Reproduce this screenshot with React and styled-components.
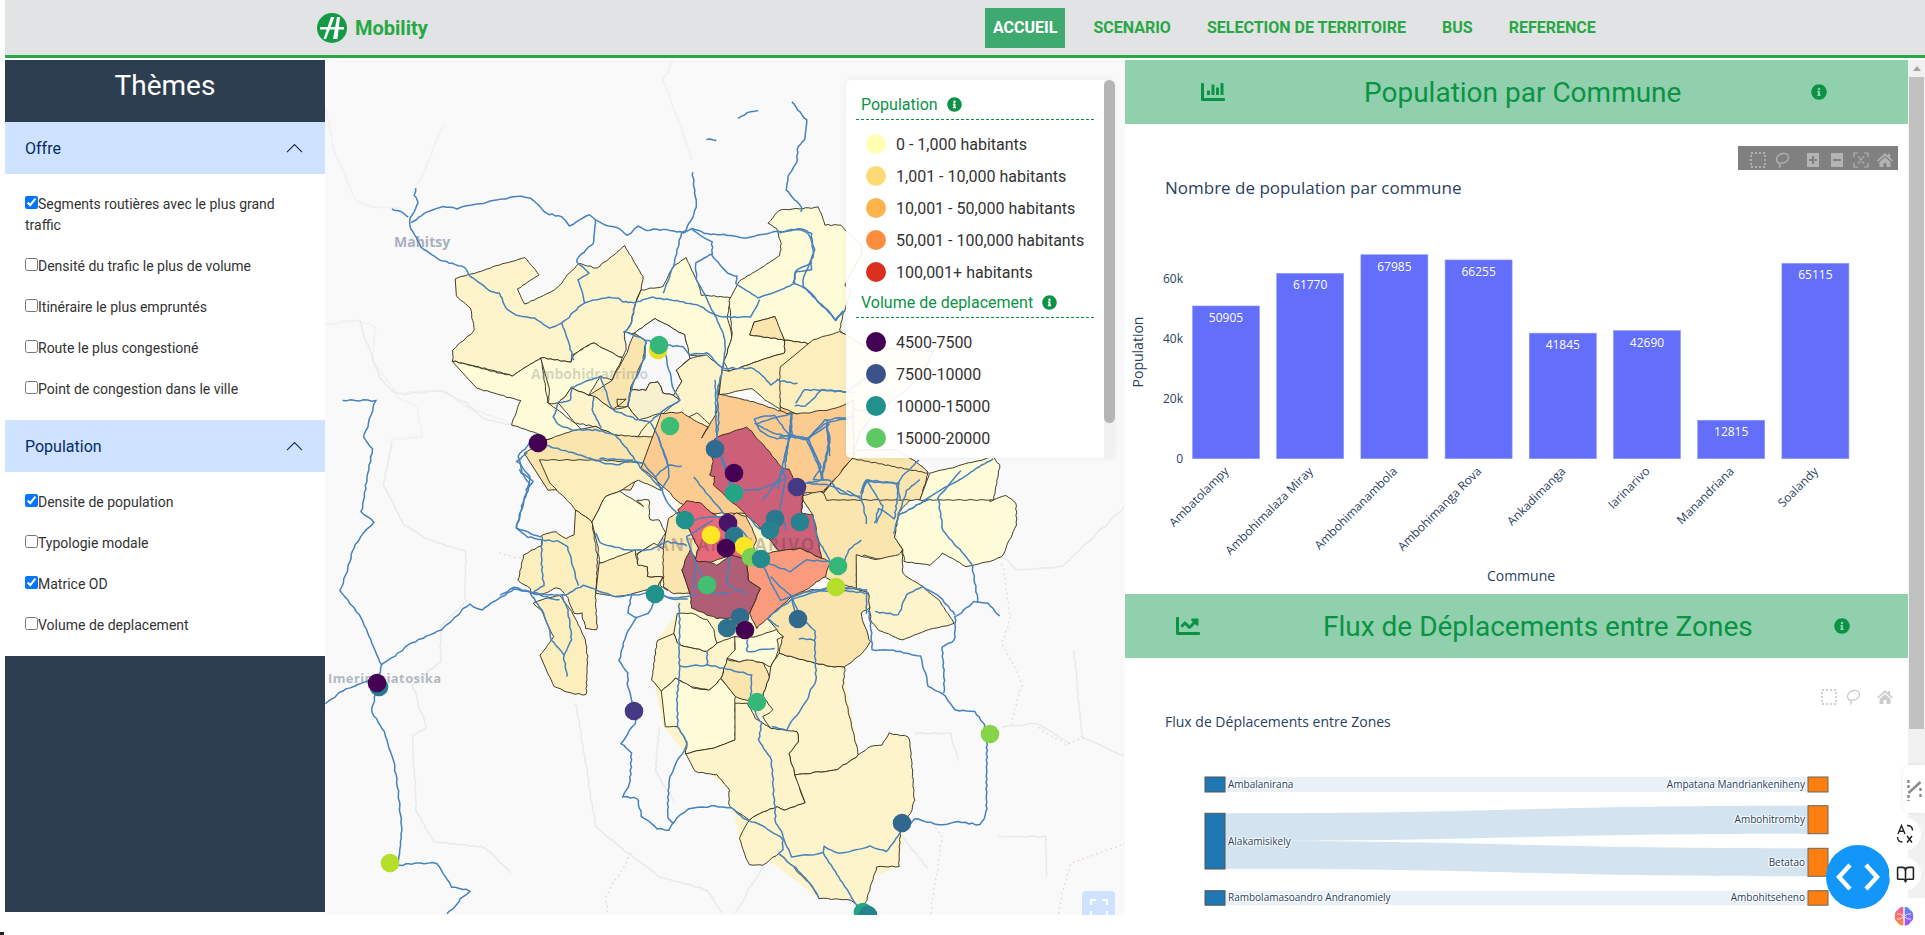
import React from 'react'
import styled, { createGlobalStyle } from 'styled-components'
import { FaChartBar, FaChartLine, FaInfoCircle } from 'react-icons/fa'
import { BookOpen } from 'lucide-react'

const GlobalStyle = createGlobalStyle`
  html, body {
    margin: 0;
    height: 100%;
    overflow: hidden;
    background: #fff;
    font-family: Roboto, "Liberation Sans", sans-serif;
  }
`

const green = '#0a9345'

/* ---------- navbar ---------- */
const Page = styled.div`
  width: 1925px;
  height: 935px;
  padding-left: 5px;
  box-sizing: border-box;
`
const Navbar = styled.nav`
  height: 55px;
  background: #e1e3e5;
  border-bottom: 3px solid #28a745;
  display: flex;
  align-items: center;
  padding-left: 312px;
`
const Brand = styled.div`
  display: flex;
  align-items: center;
  gap: 8px;
  width: 668px;
  font-size: 20px;
  font-weight: 700;
  color: #28a745;
`
const NavLink = styled.a`
  height: 40px;
  display: flex;
  align-items: center;
  padding: 0 8px;
  margin-right: 20px;
  font-size: 16px;
  font-weight: 700;
  color: ${props => props.active ? '#fff' : '#28a745'};
  background: ${props => props.active ? '#3faa70' : 'transparent'};
`

/* ---------- columns ---------- */
const Content = styled.div`
  display: flex;
  align-items: flex-start;
  margin-top: 2px;
`
const Sidebar = styled.aside`
  width: 320px;
  height: 852px;
  display: flex;
  flex-direction: column;
  background: #2c3e50;
`
const SideTitle = styled.h2`
  margin: 0;
  height: 62px;
  line-height: 52px;
  text-align: center;
  color: #fff;
  font-size: 28px;
  font-weight: 400;
`
const AccordionHead = styled.div`
  height: 52px;
  background: #cfe2ff;
  color: #052c65;
  font-size: 16px;
  display: flex;
  align-items: center;
  justify-content: space-between;
  padding: 0 22px 0 20px;
`
const AccordionBody = styled.div`
  background: #fff;
  padding: 20px 20px 0;
`
const Check = styled.label`
  display: block;
  margin-bottom: 20px;
  font-size: 14px;
  line-height: 21px;
  color: #333;
  input { margin: 0; width: 13px; height: 13px; }
`
const MapPane = styled.section`
  position: relative;
  width: 800px;
  height: 855px;
  overflow: hidden;
  background: #f9f9f9;
`
const MapCanvas = styled.svg`
  display: block;
  width: 800px;
  height: 855px;
  polygon, polyline, path { vector-effect: non-scaling-stroke; stroke-linejoin: round; }
`
const Right = styled.div`
  width: 783px;
`
const PanelHead = styled.header`
  height: 64px;
  background: #90d0ac;
  color: ${green};
  display: flex;
  align-items: center;
  padding-left: ${props => props.left}px;
  h3 {
    margin: 0 0 0 ${props => props.gapA}px;
    width: ${props => props.titleWidth}px;
    white-space: nowrap;
    font-size: 28px;
    font-weight: 400;
  }
  svg { flex: none; }
  svg:last-child { margin-left: ${props => props.gapB}px; }
`
const PanelBody = styled.div`
  position: relative;
  height: ${props => props.h}px;
  background: #fff;
`
const Chart = styled.svg`
  display: block;
  font-family: "Open Sans", sans-serif;
`
const Modebar = styled.div`
  position: absolute;
  top: ${props => props.top}px;
  right: 10px;
  display: flex;
  align-items: center;
  padding: 3px 5px 0 ${props => props.pad}px;
  box-sizing: border-box;
  height: 24px;
  gap: 8px;
  color: ${props => props.dark ? '#b3b3b3' : '#cdcdcd'};
  background: ${props => props.dark ? '#808080' : 'transparent'};
  svg:nth-child(3) { margin-left: ${props => props.groupGap}px; }
`
const Track = styled.div`
  width: 17px;
  height: 855px;
  background: #f1f1f1;
  display: flex;
  flex-direction: column;
  align-items: center;
`
const TrackArrow = styled.div`
  margin-top: 6px;
  width: 0;
  height: 0;
  border-left: 4px solid transparent;
  border-right: 4px solid transparent;
  border-bottom: 5px solid #a3a3a3;
`
const TrackThumb = styled.div`
  margin-top: 6px;
  width: 15px;
  height: 652px;
  background: #c1c1c1;
`

/* ---------- map legend ---------- */
const Legend = styled.div`
  position: absolute;
  top: 20px;
  left: 521px;
  width: 269px;
  height: 378px;
  display: flex;
  border-radius: 5px;
  overflow: hidden;
  box-shadow: 0 0 6px rgba(0,0,0,.06);
`
const LegendBody = styled.div`
  width: 238px;
  padding: 10px 10px 0;
  background: rgba(255,255,255,.91);
`
const LegendTitle = styled.div`
  height: 29px;
  line-height: 28px;
  padding-left: 5px;
  border-bottom: 1px dashed ${green};
  margin-bottom: 8px;
  color: ${green};
  font-size: 16px;
  display: flex;
  align-items: center;
  gap: 9px;
`
const LegendRow = styled.div`
  height: 32px;
  display: flex;
  align-items: center;
  gap: 10px;
  padding-left: 10px;
  font-size: 16px;
  color: #333;
  white-space: nowrap;
`
const Swatch = styled.span`
  width: 20px;
  height: 20px;
  border-radius: 50%;
  background: ${props => props.color};
`
const LegendTrack = styled.div`
  width: 11px;
  background: rgba(240,240,240,.9);
`
const LegendThumb = styled.div`
  height: 343px;
  border-radius: 6px;
  background: #b5b5b5;
`
const FullScreen = styled.button`
  position: absolute;
  left: 757px;
  top: 831px;
  width: 33px;
  height: 33px;
  padding: 0;
  border: 0;
  border-radius: 4px;
  background: #cfe2ff;
  display: flex;
  align-items: center;
  justify-content: center;
`

/* ---------- floating widgets ---------- */
const Fab = styled.div`
  position: fixed;
  left: 1826px;
  top: 845px;
  width: 64px;
  height: 64px;
  border-radius: 50%;
  background: #1296fa;
  display: flex;
  align-items: center;
  justify-content: center;
  z-index: 3;
`
const SideTab = styled.div`
  position: fixed;
  left: 1903px;
  top: 765px;
  width: 22px;
  height: 48px;
  background: #fff;
  border-radius: 8px 0 0 8px;
  box-shadow: 0 0 4px rgba(0,0,0,.08);
  display: flex;
  align-items: center;
  padding-left: 4px;
  box-sizing: border-box;
`
const RoundTool = styled.div`
  position: fixed;
  left: 1889px;
  top: ${props => props.top}px;
  width: 32px;
  height: 32px;
  border-radius: 50%;
  background: #fff;
  color: #222;
  display: flex;
  align-items: center;
  justify-content: center;
  z-index: 4;
`
const BrainPill = styled.div`
  position: fixed;
  left: 1885px;
  top: 898px;
  width: 40px;
  height: 37px;
  background: #fff;
  border-radius: 20px 0 0 20px;
  display: flex;
  align-items: center;
  padding-left: 9px;
  box-sizing: border-box;
  z-index: 4;
`
const CornerMark = styled.div`
  position: fixed;
  left: 0;
  bottom: 0;
  width: 4px;
  height: 3px;
  background: #222;
`

/* ---------- map data, traced per crop ---------- */
const light = '#fefbd8'
const pale = '#fdf4cc'
const soft = '#fdefbd'
const wheat = '#fbe5ae'
const orange = '#fbcb90'
const coral = '#fb9b7e'
const rose = '#cc6078'
const pink = '#e66a78'
const plum = '#b05e76'

// the hand traced lines are too clean, this roughens them the same way on shared borders
const wiggle = (points, amp = 1.5, step = 10) => {
  const pts = points.trim().split(' ').map(p => p.split(',').map(Number))
  const out = []
  const push = (x, y) => out.push(
    `${(x + Math.sin(x * .61 + y * .37) * amp + Math.sin(y * 1.3) * amp * .5).toFixed(1)},${(y + Math.cos(x * .43 - y * .59) * amp + Math.sin(x * 1.1) * amp * .5).toFixed(1)}`
  )
  pts.forEach(([x, y], i) => {
    const next = pts[i + 1]
    if (!next) return push(x, y)
    const n = Math.max(1, Math.round(Math.hypot(next[0] - x, next[1] - y) / step))
    for (let k = 0; k < n; k++) push(x + (next[0] - x) * k / n, y + (next[1] - y) * k / n)
  })
  return out.join(' ')
}

const northUnder = ['640,893 1175,925 1165,1090 985,1130 860,1125 660,1030']
const southUnder = [
  '445,430 700,470 860,590 900,855 1035,920 1000,1190 800,1285 600,1105 575,960 465,850 410,770 385,630 395,510',
  '440,120 480,0 760,0 760,480 445,430 430,300',
]

const northPolys = [
  [pale, '385,657 590,592 633,645 570,688 592,733 680,690 750,610 805,625 887,557 942,650 935,690 918,730 905,790 885,818 892,870 880,893 850,880 795,848 730,885 728,907 640,893 555,947 520,937 378,903 378,870 443,810 430,745 387,707'],
  [light, '378,903 520,940 555,947 640,893 655,1000 660,1030 740,1090 760,1110 715,1130 655,1140 628,1120 552,1095 578,1022 450,985'],
  [light, '640,893 728,907 735,885 795,848 850,880 880,893 850,960 815,950 780,1005 730,985 690,1030 660,1030 665,985'],
  [wheat, '780,1005 815,985 850,960 885,895 915,820 950,840 940,900 905,985 895,1040 865,1040 865,1018 892,1018 850,1050 800,1010'],
  [pale, '690,1030 730,985 780,1005 800,1010 850,1050 895,1040 930,1080 960,1085 925,1130 895,1130 860,1125 800,1100 745,1090 740,1090 710,1050'],
  [light, '935,690 1000,680 1030,620 1070,593 1095,650 1115,705 1200,713 1190,770 1205,830 1180,905 1175,925 1130,890 1075,885 1065,825 975,775 915,820 885,818 905,790 918,730'],
  ['#f8f8fb', '915,820 975,775 1065,825 1080,895 1040,930 1055,965 1030,1005 1000,1000 985,965 960,970 950,990 905,990 945,895 950,840'],
  ['#f7f1cf', '905,990 950,990 960,970 985,965 1000,1000 1030,1005 1050,1020 990,1060 930,1080 895,1040'],
  [pale, '1080,895 1130,885 1175,925 1165,990 1165,1050 1140,1095 1100,1058 1040,1090 1000,1060 1050,1020 1030,1005 1055,965 1040,930'],
  [light, '1225,665 1290,625 1345,585 1350,550 1335,505 1310,490 1345,450 1460,442 1480,495 1525,495 1538,510 1587,555 1587,585 1538,675 1558,690 1533,760 1523,810 1602,875 1540,940 1490,975 1470,950 1455,880 1430,850 1360,840 1340,800 1330,770 1270,785 1258,825 1360,840 1360,880 1290,900 1195,933 1180,905 1205,830 1195,720'],
  [soft, '1175,930 1195,933 1290,900 1360,880 1360,840 1430,850 1455,880 1470,950 1490,975 1540,940 1568,930 1640,990 1568,1030 1500,1040 1420,1070 1350,1050 1300,1020 1265,985 1165,1005'],
  [wheat, '1270,785 1330,770 1360,840 1258,825'],
  [wheat, '590,1180 655,1140 750,1108 800,1100 860,1125 925,1130 985,1130 980,1165 935,1230 905,1290 660,1290'],
]

const southPolys = [
  [soft, '120,30 190,120 230,155 265,80 300,65 345,30 405,60 375,-20 250,-30 100,-30'],
  [soft, '190,120 230,155 245,260 240,370 243,480 215,475 205,430 185,430 170,385 150,355 135,355 105,375 80,370 75,355 45,330 60,255 105,225 105,195 140,185 165,205 185,195'],
  [soft, '100,555 120,525 135,500 105,425 85,400 105,390 150,375 180,425 215,510 220,560 217,675 180,670 135,650 120,610'],
  [light, '230,155 265,80 300,65 360,110 345,90 375,90 375,150 400,150 415,190 395,230 380,225 340,255 250,280 245,220'],
  [soft, '250,280 340,240 345,280 370,290 370,320 410,320 395,350 340,370 295,380 240,370'],
  [pale, '385,220 415,240 460,260 455,300 440,340 420,360 400,345 410,320 370,320 370,290 345,285 345,250'],
  [light, '445,430 480,430 520,450 535,480 545,520 520,545 450,525 435,490'],
  [pale, '435,490 450,525 520,545 545,520 590,500 590,570 565,585 555,625 525,660 480,650 440,625 405,665 380,630 395,510'],
  [light, '405,665 440,625 485,655 525,660 555,625 590,680 590,810 535,835 465,850 470,815 445,770 415,770'],
  [light, '590,500 640,500 695,480 710,500 695,510 700,540 680,590 660,580 620,570 600,575 570,565 590,540'],
  [wheat, '555,625 570,570 600,575 625,570 660,580 675,620 660,680 640,700 590,680'],
  [pale, '680,590 700,550 760,570 830,590 865,590 860,650 900,855 845,900 740,915 725,850 750,815 745,785 700,785 680,775 660,740 685,720 660,680 675,620'],
  [pale, '590,700 620,700 640,745 680,775 745,785 750,815 725,850 740,915 765,1000 712,1020 695,1012 660,1025 625,1050 575,1010 575,960 545,915 490,905 465,850 535,835 590,810'],
  [pale, '740,915 845,900 900,855 930,830 960,825 975,790 1025,800 1030,830 1035,920 1040,990 1030,1030 1005,1080 1000,1190 945,1190 920,1290 905,1310 880,1290 800,1285 775,1240 735,1190 700,1150 660,1185 625,1185 600,1105 625,1050 660,1025 695,1012 712,1020 765,1000'],
  [wheat, '755,80 800,60 830,55 850,0 900,-60 1000,-60 1075,5 1050,60 1000,130 990,200 1010,240 1000,260 945,268 915,255 895,280 895,355 865,345 820,325 785,270 790,230 785,135'],
  [wheat, '670,445 720,385 780,360 880,355 925,365 930,410 905,430 915,470 930,515 910,550 865,590 830,590 760,570 700,550 710,500 695,480'],
  [pale, '895,255 940,268 1000,255 1010,240 1010,310 1060,350 1105,395 1140,460 1075,480 1010,510 950,480 930,450 925,370 895,355'],
  [light, '990,200 1000,135 1080,85 1150,0 1250,0 1220,40 1230,95 1270,75 1295,100 1295,165 1260,260 1230,275 1170,290 1110,250 1080,285 1015,275 1010,240'],
]

const legendPolys = [
  [soft, '100,420 180,395 260,440 460,455 430,520 360,585 280,645 200,680 60,650 0,620 0,500'],
  [orange, '0,620 70,650 210,620 280,645 240,700 215,775 130,880 85,850 30,800 0,790'],
  [wheat, '215,775 445,820 420,900 140,900 130,880'],
  [light, '450,820 640,770 660,795 640,900 420,900'],
]

const cityPolys = [
  [orange, '185,100 245,97 300,130 325,140 305,175 350,100 355,42 415,55 470,68 560,100 610,100 680,90 720,80 760,60 760,230 715,285 670,335 610,340 605,400 335,400 240,370 180,310 125,265'],
  [wheat, '205,415 235,395 270,450 295,505 285,545 245,570 270,640 220,640 190,620 190,500'],
  [rose, '325,200 350,170 440,140 490,195 548,265 568,268 607,345 605,400 640,405 665,535 600,505 540,515 500,470 470,430 440,405 395,365 340,315 345,290 330,285 340,245'],
  [pink, '235,390 260,362 305,370 335,400 375,420 420,500 440,540 380,530 325,550 285,545 295,505 270,450'],
  [coral, '440,540 520,515 600,505 665,535 690,545 675,590 625,625 575,650 530,690 470,745 450,700 480,625 445,600'],
  [plum, '245,570 270,510 290,545 325,545 350,555 395,525 440,540 445,600 480,625 450,700 410,715 350,715 275,685 270,640'],
  [orange, '410,400 440,410 470,480 455,510 440,530 420,500 375,420'],
]

const northRivers = [
  '270,385 265,405 275,430 262,455 250,475 252,505 285,560 340,600 415,622 430,650 490,695 515,700 540,750 575,768 620,775 665,803 700,790 765,730 830,712 870,715 880,725 915,728 960,712 1040,722 1100,735 1165,770 1230,772',
  '200,448 225,455 248,472',
  '255,490 300,458 350,440 390,445 460,430 520,418 575,408 610,415 655,460 700,470 725,497 780,465 800,480 830,495 870,505 895,525 925,500 950,510 1000,508 1060,518 1085,505 1130,522 1190,525 1250,535 1280,525 1340,515 1400,508 1430,520',
  '800,480 795,550 750,590 745,605 780,640 750,660 770,730',
  '1086,335 1095,400 1100,440 1070,510 1055,520 1030,620 1000,700',
  '1382,125 1425,180 1420,240 1400,260 1395,310 1370,350 1365,390 1410,440 1410,458',
  '1222,175 1250,160 1280,152',
  '1128,237 1160,240',
  '1085,510 1145,545 1145,580 1095,610 1100,660 1130,720 1180,820 1185,860 1175,930 1160,1000 1165,1090 1155,1170',
  '1145,585 1190,640 1220,650 1215,670 1280,715 1340,695 1390,670 1430,690 1510,780 1540,750',
  '1285,720 1260,770 1230,772',
  '1430,520 1448,570 1435,610 1440,630 1390,635 1390,670',
  '700,790 725,860 730,885 735,900',
  '918,730 905,795 885,815 950,840 1000,855 1060,860 1080,885 1130,878 1175,925 1270,925 1320,975 1340,960 1398,972',
  '950,840 945,895 905,990 895,1040',
  '1000,860 1030,980 1050,1020 990,1060 960,1085 985,1130 1010,1200 1020,1250 990,1290',
  '815,950 850,1050 930,1080 960,1085',
  '815,950 780,960 730,985 725,1020 690,1030 675,1070 690,1095 735,1110 800,1110 860,1125 910,1190 940,1230 1000,1290',
  '630,1150 720,1175 830,1210 870,1215 910,1200',
  '1390,1035 1420,1040 1470,990 1568,998',
  '605,1150 570,1190 585,1240 615,1265 595,1290',
  '795,1010 790,1050 820,1105',
  '1270,1075 1330,1065 1375,1130 1430,1135',
  '1380,1060 1375,1135 1350,1230 1340,1290',
  '1270,1075 1290,1115 1330,1135 1375,1135',
  '1430,1135 1460,1210 1470,1260',
  '1485,1090 1490,1150 1470,1240',
  '1430,1135 1480,1090 1568,1070',
]

const westRivers = [
  '840,205 920,205 890,300 912,330 885,490 915,515 870,570 835,690 880,750 935,880 925,926 910,1000 940,1050 965,1120 985,1290 975,1390 1020,1385 1070,1385 1105,1445 1150,1455 1095,1515',
  '935,880 1000,830 1080,790 1150,725 1180,740 1260,685 1300,695 1370,715',
  '905,920 840,945 797,980',
  '1290,340 1265,360 1300,400 1265,530 1325,555',
]

const southRivers = [
  '0,375 35,352 80,368 130,375 165,375 210,345 240,360 290,380 370,370 405,375 440,390 470,385',
  '50,0 75,40 60,90 40,175 70,200 105,210 150,215 170,230 195,345',
  '105,210 105,290 110,345 80,368',
  '240,190 250,220 320,240 380,240 420,215 470,225',
  '75,370 110,430 130,510 160,555 168,620',
  '155,375 170,420 180,510 160,555',
  '330,375 320,430 340,445 370,430 388,395',
  '340,445 315,500 300,570 320,610 320,650 335,700 340,760 305,820 330,850 325,940 310,980 345,985 355,1040 395,1075 425,1082 440,1045 475,1015 540,1008 580,1015 620,1050 665,1070 710,1110 710,1140 700,1150 780,1240 800,1285',
  '450,400 450,500 450,600 445,680 445,770 470,820 425,920 420,1040 435,1060',
  '450,590 520,585 580,600 630,615 630,700 655,760 650,810 680,870 690,1010 690,1050 715,1110 730,1160 810,1150 815,1130 850,1150 930,1130 970,1145 1005,1090 1040,1045 1100,1065 1150,1055 1205,1065 1220,1025 1220,900 1222,815',
  '810,1150 860,1240 900,1320',
  '620,510 620,545 690,535',
  '520,545 520,585',
  '700,470 670,445 735,385 790,365 850,360 925,370',
  '735,385 750,440 790,480 792,630 770,690 720,780 680,770',
  '750,505 790,510',
  '925,420 935,540 985,540 1055,560 1075,650 1110,670 1140,720 1190,725 1215,765 1222,815',
  '1115,670 1110,530 1140,510 1142,440 1190,395 1225,400 1255,440',
  '1140,435 1105,380 1060,350 1020,375 1000,435 940,425',
  '1200,395 1185,290 1165,255 1110,180 1100,85 1155,0',
  '1080,85 1000,135',
  '940,160 950,115 990,145 1000,40 920,35 905,75 920,160',
  '870,60 910,90',
  '905,210 875,240 860,290',
]

const cityRivers = [
  '345,0 350,180 385,290 395,360',
  '360,230 400,330 470,330 560,295 545,265',
  '470,130 575,100 555,270 490,360',
  '575,100 575,170 620,180 690,130',
  '620,180 665,260 640,300',
  '680,130 690,230',
  '465,130 520,160 570,170',
  '0,235 80,240 130,250 165,290 205,370 250,420',
  '165,290 205,255 245,260',
  '175,170 205,255',
  '280,290 370,400 405,430 440,470 480,535 510,600 540,660 570,650',
  '235,430 330,410 385,410',
  '340,420 260,470 290,560 320,610',
  '445,410 480,450',
  '555,300 540,390 560,450',
  '640,405 650,470 690,545',
  '480,540 570,575 620,540 690,545',
  '390,520 380,610 410,630 440,640',
  '285,560 280,620 330,640 390,640',
  '165,640 220,655 290,645',
  '510,590 575,650 590,720',
  '570,650 650,630 715,620 800,630 800,700',
  '780,350 720,340 690,300 640,300',
  '785,340 800,300 850,380 830,430',
  '880,460 920,330 960,300',
]

const legendRivers = [
  '0,100 60,85 95,100 100,170 70,230 70,260 120,310 170,360 190,330',
  '40,250 50,210 95,190',
  '45,610 75,570 130,570 200,575 260,530',
  '0,710 30,705 85,715 135,660 215,650',
  '35,640 30,705 10,790',
  '85,715 115,800 130,840',
  '140,660 150,720 125,840 80,850 150,855 200,880',
  '240,880 260,840 350,850 415,780',
  '350,850 360,900',
  '430,900 520,850 640,775',
]

const tileNorth = [
  '0,140 30,280 90,420 130,440 215,445',
  '0,795 90,780 150,800 140,900 210,1000 350,990 420,1040 550,1090',
  '350,190 300,320 260,400',
  '1030,0 1000,60 1060,220 1085,300',
  '190,1140 290,1130 270,1040 210,1010',
]
const tileWest = [
  '880,0 930,150 970,190 1080,180 1140,210 1180,250 1260,270',
  '960,310 940,420 990,520 1050,560 1140,590 1140,720 1080,780 1080,870 1010,930 1045,1040 1010,1060 1020,1250 1060,1330 1190,1345 1250,1410',
]
const tileSouth = [
  '190,700 215,880 240,1070 300,1130 400,1220 520,1260 560,1330',
  '400,770 390,900 440,1000',
  '1250,250 1300,300 1410,290 1568,110',
  '1440,540 1460,800 1568,860',
  '1260,770 1350,760 1430,820',
  '1010,1100 1075,1195',
  '1250,1100 1370,1100 1370,1220',
  '1040,790 1130,790 1150,870',
  '590,1330 660,1190',
]
const tilePink = [
  '0,250 50,265',
  '1260,280 1280,440 1260,520 1310,640 1280,770',
  '330,1150 265,1280 270,1330',
  '1080,1330 1110,1100 1080,1050',
  '1400,1330 1430,1180 1568,1120',
  '1350,770 1420,825 1470,800',
]

const dots = [
  [658, 350, '#e8e020'], [659, 345, '#35b779'], [670, 426, '#3fbc73'], [715, 449, '#2f6a8f'],
  [734, 493, '#21a585'], [734, 473, '#440154'], [728, 523, '#481467'], [797, 487, '#443983'],
  [685, 520, '#21918c'], [711, 535, '#fde725'], [734, 536, '#2a788e'], [744, 546, '#fde725'],
  [726, 548, '#440154'], [775, 519, '#2a788e'], [770, 530, '#26828e'], [800, 522, '#26828e'],
  [751, 557, '#7ad151'], [761, 559, '#238a8d'], [838, 566, '#35b779'], [836, 587, '#b5de2b'],
  [707, 585, '#43bf71'], [655, 594, '#21918c'], [740, 617, '#2f6c8e'], [727, 628, '#2c728e'],
  [745, 630, '#fde725'], [745, 630, '#440154'], [798, 619, '#31688e'], [538, 443, '#440154'],
  [379, 687, '#2a788e'], [377, 683, '#440154'], [390, 863, '#b5de2b'], [634, 711, '#443983'],
  [990, 734, '#86d549'], [902, 823, '#31688e'], [757, 702, '#35b779'], [863, 912, '#21a585'], [868, 915, '#26828e'],
]

const Under = ({ list, fill }) => list.map((points, i) => <polygon key={i} points={points} fill={fill} />)
const Polys = ({ list }) => list.map(([fill, points], i) => (
  <polygon key={i} points={wiggle(points, 1.2)} fill={fill} stroke="#2e2818" strokeWidth="1" strokeOpacity=".9" />
))
const Lines = ({ list, color = '#4682bb', width = 1.5, dash, amp }) => list.map((points, i) => (
  <polyline key={i} points={wiggle(points, amp)} fill="none" stroke={color} strokeWidth={width} strokeDasharray={dash} />
))

const northGroup = 'translate(325 60) scale(.338 .3333)'
const southGroup = 'translate(500 470) scale(.3986 .3333)'
const westGroup = 'translate(0 320) scale(.4082 .3922)'
const legendGroup = 'translate(780 200) scale(.3333)'
const cityGroup = 'translate(600 380) scale(.3333)'

const MapDrawing = () => (
  <MapCanvas viewBox="325 60 800 855">
    <g transform={northGroup}><Lines list={tileNorth} color="#f0f1f3" width={1.6} /></g>
    <g transform={westGroup}><Lines list={tileWest} color="#e8ebee" width={1.6} /></g>
    <g transform={southGroup}>
      <Lines list={tileSouth} color="#e8ebee" width={1.6} />
      <Lines list={tilePink} color="#f0d6dc" width={1.3} dash="2 3" />
    </g>
    <text x="394" y="247" fill="#a9b1bc" fontSize="14" fontWeight="700" fontFamily="Open Sans">Mahitsy</text>
    <text x="328" y="683" fill="#b3b9c2" fontSize="13" fontWeight="700" letterSpacing=".4" fontFamily="Open Sans">Imerintsiatosika</text>
    <g transform={northGroup}><Under list={northUnder} fill={pale} /></g>
    <g transform={southGroup}><Under list={southUnder} fill={pale} /></g>
    <g transform={northGroup}><Polys list={northPolys} /></g>
    <g transform={southGroup}><Polys list={southPolys} /></g>
    <g transform={legendGroup}><Polys list={legendPolys} /></g>
    <g transform={cityGroup}><Polys list={cityPolys} /></g>
    <text x="531" y="379" fill="rgba(120,130,130,.32)" fontSize="14" fontWeight="700" fontFamily="Open Sans">Ambohidratrimo</text>
    <text x="657" y="551" fill="rgba(70,50,60,.28)" fontSize="17" fontWeight="700" letterSpacing="1.6" fontFamily="Open Sans">ANTANANARIVO</text>
    <g transform={northGroup}><Lines list={northRivers} /></g>
    <g transform={westGroup}><Lines list={westRivers} /></g>
    <g transform={southGroup}><Lines list={southRivers} /></g>
    <g transform={legendGroup}><Lines list={legendRivers} /></g>
    <g transform={cityGroup}><Lines list={cityRivers} amp={1.2} /></g>
    {dots.map(([cx, cy, fill], i) => <circle key={i} cx={cx} cy={cy} r="9.3" fill={fill} />)}
  </MapCanvas>
)

/* ---------- bar chart ---------- */
const communes = [
  ['Ambatolampy', 50905], ['Ambohimalaza Miray', 61770], ['Ambohimanambola', 67985], ['Ambohimanga Rova', 66255],
  ['Ankadimanga', 41845], ['Iarinarivo', 42690], ['Manandriana', 12815], ['Soalandy', 65115],
]
const tickColor = '#2a3f5f'

const BarChart = () => (
  <Chart width="783" height="470" viewBox="1125 124 783 470">
    <text x="1165" y="194" fontSize="17" fill={tickColor}>Nombre de population par commune</text>
    {[0, 20, 40, 60].map(k => (
      <text key={k} x="1183" y={462.7 - k * 3} fontSize="12" textAnchor="end" fill={tickColor}>{k ? `${k}k` : 0}</text>
    ))}
    {communes.map(([name, value], i) => {
      const x = 1192.5 + i * 84.2
      const top = 458.7 - value * 0.003
      return (
        <g key={name}>
          <rect x={x} y={top} width="67" height={458.7 - top} fill="#636efa" stroke="#8f98fb" strokeWidth=".6" />
          <text x={x + 33.5} y={top + 16} fontSize="12" fill="#fff" textAnchor="middle">{value}</text>
          <text transform={`translate(${x + 37} 472) rotate(-45)`} fontSize="12" fill={tickColor} textAnchor="end">{name}</text>
        </g>
      )
    })}
    <text x="1521" y="581" fontSize="14" fill={tickColor} textAnchor="middle">Commune</text>
    <text transform="translate(1143 352) rotate(-90)" fontSize="14" fill={tickColor} textAnchor="middle">Population</text>
  </Chart>
)

/* ---------- sankey ---------- */
const ribbon = (y0a, y0b, y1a, y1b) =>
  `M1225 ${y0a} C1516 ${y0a} 1516 ${y1a} 1808 ${y1a} L1808 ${y1b} C1516 ${y1b} 1516 ${y0b} 1225 ${y0b} Z`

const sankeyLeft = [[777, 15], [813.3, 55.7], [890.7, 14.5]]
const sankeyRight = [[777, 15], [805.7, 28], [848.3, 28], [890.7, 14.5]]
const SankeyText = styled.text`
  font-size: 10px;
  fill: ${tickColor};
  text-shadow: 1px 1px 1px #fff, -1px -1px 1px #fff, 1px -1px 1px #fff, -1px 1px 1px #fff;
`

const Sankey = () => (
  <Chart width="783" height="257" viewBox="1125 658 783 257">
    <text x="1165" y="727" fontSize="14" fill={tickColor}>Flux de Déplacements entre Zones</text>
    <path d={ribbon(777, 792, 777, 792)} fill="#e9f0f6" />
    <path d={ribbon(813.3, 841, 805.7, 833.7)} fill="#d3e4f0" />
    <path d={ribbon(841, 869, 848.3, 876.3)} fill="#d3e4f0" />
    <path d={ribbon(890.7, 905.2, 890.7, 905.2)} fill="#e9f0f6" />
    {sankeyLeft.map(([y, h]) => <rect key={y} x="1205" y={y} width="20" height={h} fill="#1f77b4" stroke="#555" strokeWidth="1" />)}
    {sankeyRight.map(([y, h]) => <rect key={y} x="1808" y={y} width="20" height={h} fill="#ff7f0e" stroke="#666" strokeWidth="1" />)}
    <SankeyText x="1228" y="788">Ambalanirana</SankeyText>
    <SankeyText x="1228" y="845">Alakamisikely</SankeyText>
    <SankeyText x="1228" y="901">Rambolamasoandro Andranomiely</SankeyText>
    <SankeyText x="1805" y="788" textAnchor="end">Ampatana Mandriankeniheny</SankeyText>
    <SankeyText x="1805" y="823" textAnchor="end">Ambohitromby</SankeyText>
    <SankeyText x="1805" y="866" textAnchor="end">Betatao</SankeyText>
    <SankeyText x="1805" y="901" textAnchor="end">Ambohitseheno</SankeyText>
  </Chart>
)

/* ---------- small drawings ---------- */
const Logo = () => (
  <svg width="30" height="30" viewBox="0 0 30 30">
    <circle cx="15" cy="15" r="15" fill="#149a47" />
    <path d="M14 4h3.500L9 26H6.500zM20 4h3l-2.500 22H16zM3 14h24v2.400H3z" fill="#fff" />
  </svg>
)
const Chevron = () => (
  <svg width="17" height="10" viewBox="0 0 17 10" fill="none" stroke="#052c65" strokeWidth="1.1"><path d="M1 9.200 8.500 1.500 16 9.200" /></svg>
)
const SelectIcon = () => (
  <svg width="16" height="16" viewBox="0 0 16 16" fill="none" stroke="currentColor" strokeWidth="1.8" strokeDasharray="2 2"><rect x="1" y="1" width="14" height="14" /></svg>
)
const LassoIcon = () => (
  <svg width="16" height="16" viewBox="0 0 16 16" fill="none" stroke="currentColor" strokeWidth="1.3"><path d="M4 11C1 8 3 2 9 1.500c4-.3 6 2 5.500 5-.5 3-5 5-8.500 4.500M5 10c-1 1 0 2 1 2.500S6 15 5 15.500" /></svg>
)
const PlusIcon = () => (
  <svg width="16" height="16" viewBox="0 0 16 16"><path fill="currentColor" fillRule="evenodd" d="M2 1h12v14H2zM7 4v3H4v2h3v3h2V9h3V7H9V4z" /></svg>
)
const MinusIcon = () => (
  <svg width="16" height="16" viewBox="0 0 16 16"><path fill="currentColor" fillRule="evenodd" d="M2 1h12v14H2zM4 7v2h8V7z" /></svg>
)
const AutoIcon = () => (
  <svg width="16" height="16" viewBox="0 0 16 16" fill="none" stroke="currentColor" strokeWidth="1.2"><path d="M5 1H1v4M11 1h4v4M5 15H1v-4M11 15h4v-4M5 4l6 8M11 4l-6 8" /></svg>
)
const HomeIcon = () => (
  <svg width="16" height="16" viewBox="0 0 16 16"><path fill="currentColor" d="M8 1 0 8.500l1 1L8 3.500l7 6 1-1-3-2.800V2h-2v1.800zM2.500 10 8 5l5.500 5v5H9.500v-4h-3v4h-4z" /></svg>
)
const ExpandIcon = () => (
  <svg width="18" height="18" viewBox="0 0 18 18" fill="none" stroke="#fff" strokeWidth="2"><path d="M1 6V1h5M12 1h5v5M1 12v5h5M17 12v5h-5" /></svg>
)
const RoadIcon = () => (
  <svg width="15" height="24" viewBox="0 0 15 24" fill="none" stroke="#8a8a8a" strokeWidth="2.400"><path d="M1.500 16 13.500 5" /><path d="M1.500 3v8M1.500 18v6M13.500 11v3M13.500 17v5" strokeDasharray="3 2" /></svg>
)
const TranslateIcon = () => (
  <svg width="18" height="20" viewBox="0 0 18 20" fill="none" stroke="#222" strokeWidth="1.400"><path d="M2 10 5.500 1.500 9 10M3.200 7.200h4.600M11 1.500c3.500 0 5.500 2 5.500 5M1.500 13c0 3 2 5 5 5" /><path d="M11 12l5 6.500M16 12l-5 6.500" /></svg>
)
const BrainIcon = () => (
  <svg width="20" height="21" viewBox="0 0 20 21">
    <defs>
      <linearGradient id="brainA" x1="0" y1="0" x2="0" y2="1"><stop offset="0" stopColor="#f0569c" /><stop offset="1" stopColor="#ff8a3c" /></linearGradient>
      <linearGradient id="brainB" x1="0" y1="0" x2="0" y2="1"><stop offset="0" stopColor="#4f8dff" /><stop offset="1" stopColor="#b04df0" /></linearGradient>
    </defs>
    <path d="M9.300 1C6.500.5 4.500 2 4 4 1.500 5 .5 7.500 1 10c-.8 2.500.3 5 2.500 6 .7 2.500 3.500 4 5.800 3.500z" fill="url(#brainA)" />
    <path d="M10.700 1c2.800-.5 4.800 1 5.300 3 2.500 1 3.500 3.500 3 6 .8 2.500-.3 5-2.500 6-.7 2.500-3.500 4-5.800 3.500z" fill="url(#brainB)" />
    <path d="M3 8h4l2 2M3 13h3l3-2M17 8h-4l-2 2M17 13h-3l-3-2" stroke="#fff" strokeWidth=".8" fill="none" />
  </svg>
)

const firstList = ['Segments routières avec le plus grand traffic', 'Densité du trafic le plus de volume', 'Itinéraire le plus empruntés', 'Route le plus congestioné', 'Point de congestion dans le ville']
const secondList = [['Densite de population', true], ['Typologie modale'], ['Matrice OD', true], ['Volume de deplacement']]
const popLegend = [['0 - 1,000 habitants', '#ffffb2'], ['1,001 - 10,000 habitants', '#fed976'], ['10,001 - 50,000 habitants', '#feb24c'], ['50,001 - 100,000 habitants', '#fd8d3c'], ['100,001+ habitants', '#d92f1c']]
const volLegend = [['4500-7500', '#440154'], ['7500-10000', '#3b528b'], ['10000-15000', '#21918c'], ['15000-20000', '#5ec962']]

export default function App() {
  return (
    <Page>
      <GlobalStyle />
      <Navbar>
        <Brand><Logo />Mobility</Brand>
        <NavLink active>ACCUEIL</NavLink>
        <NavLink>SCENARIO</NavLink>
        <NavLink>SELECTION DE TERRITOIRE</NavLink>
        <NavLink>BUS</NavLink>
        <NavLink>REFERENCE</NavLink>
      </Navbar>
      <Content>
        <Sidebar>
          <SideTitle>Thèmes</SideTitle>
          <AccordionHead>Offre<Chevron /></AccordionHead>
          <AccordionBody>
            {firstList.map((t, i) => <Check key={t}><input type="checkbox" defaultChecked={i === 0} />{t}</Check>)}
          </AccordionBody>
          <AccordionHead>Population<Chevron /></AccordionHead>
          <AccordionBody>
            {secondList.map(([t, on]) => <Check key={t}><input type="checkbox" defaultChecked={!!on} />{t}</Check>)}
          </AccordionBody>
        </Sidebar>
        <MapPane>
          <MapDrawing />
          <Legend>
            <LegendBody>
              <LegendTitle>Population <FaInfoCircle size={15} /></LegendTitle>
              {popLegend.map(([t, c]) => <LegendRow key={t}><Swatch color={c} />{t}</LegendRow>)}
              <LegendTitle>Volume de deplacement <FaInfoCircle size={15} /></LegendTitle>
              {volLegend.map(([t, c]) => <LegendRow key={t}><Swatch color={c} />{t}</LegendRow>)}
            </LegendBody>
            <LegendTrack><LegendThumb /></LegendTrack>
          </Legend>
          <FullScreen aria-label="plein écran"><ExpandIcon /></FullScreen>
        </MapPane>
        <Right>
          <PanelHead left={76} gapA={139} gapB={130} titleWidth={317}>
            <FaChartBar size={24} />
            <h3>Population par Commune</h3>
            <FaInfoCircle size={16} />
          </PanelHead>
          <PanelBody h={470}>
            <BarChart />
            <Modebar dark top={22} pad={12} groupGap={7.5}>
              <SelectIcon /><LassoIcon /><PlusIcon /><MinusIcon /><AutoIcon /><HomeIcon />
            </Modebar>
          </PanelBody>
          <PanelHead left={51} gapA={123} gapB={83} titleWidth={428}>
            <FaChartLine size={24} />
            <h3>Flux de Déplacements entre Zones</h3>
            <FaInfoCircle size={16} />
          </PanelHead>
          <PanelBody h={257}>
            <Sankey />
            <Modebar top={25} pad={0} groupGap={8}>
              <SelectIcon /><LassoIcon /><HomeIcon />
            </Modebar>
          </PanelBody>
        </Right>
        <Track><TrackArrow /><TrackThumb /></Track>
      </Content>
      <SideTab><RoadIcon /></SideTab>
      <RoundTool top={818}><TranslateIcon /></RoundTool>
      <RoundTool top={858}><BookOpen size={19} /></RoundTool>
      <Fab>
        <svg width="44" height="30" viewBox="0 0 44 30" fill="none" stroke="#fff" strokeWidth="4.500"><path d="M14 3 3 15l11 12M30 3l11 12-11 12" /></svg>
      </Fab>
      <BrainPill><BrainIcon /></BrainPill>
      <CornerMark />
    </Page>
  )
}
